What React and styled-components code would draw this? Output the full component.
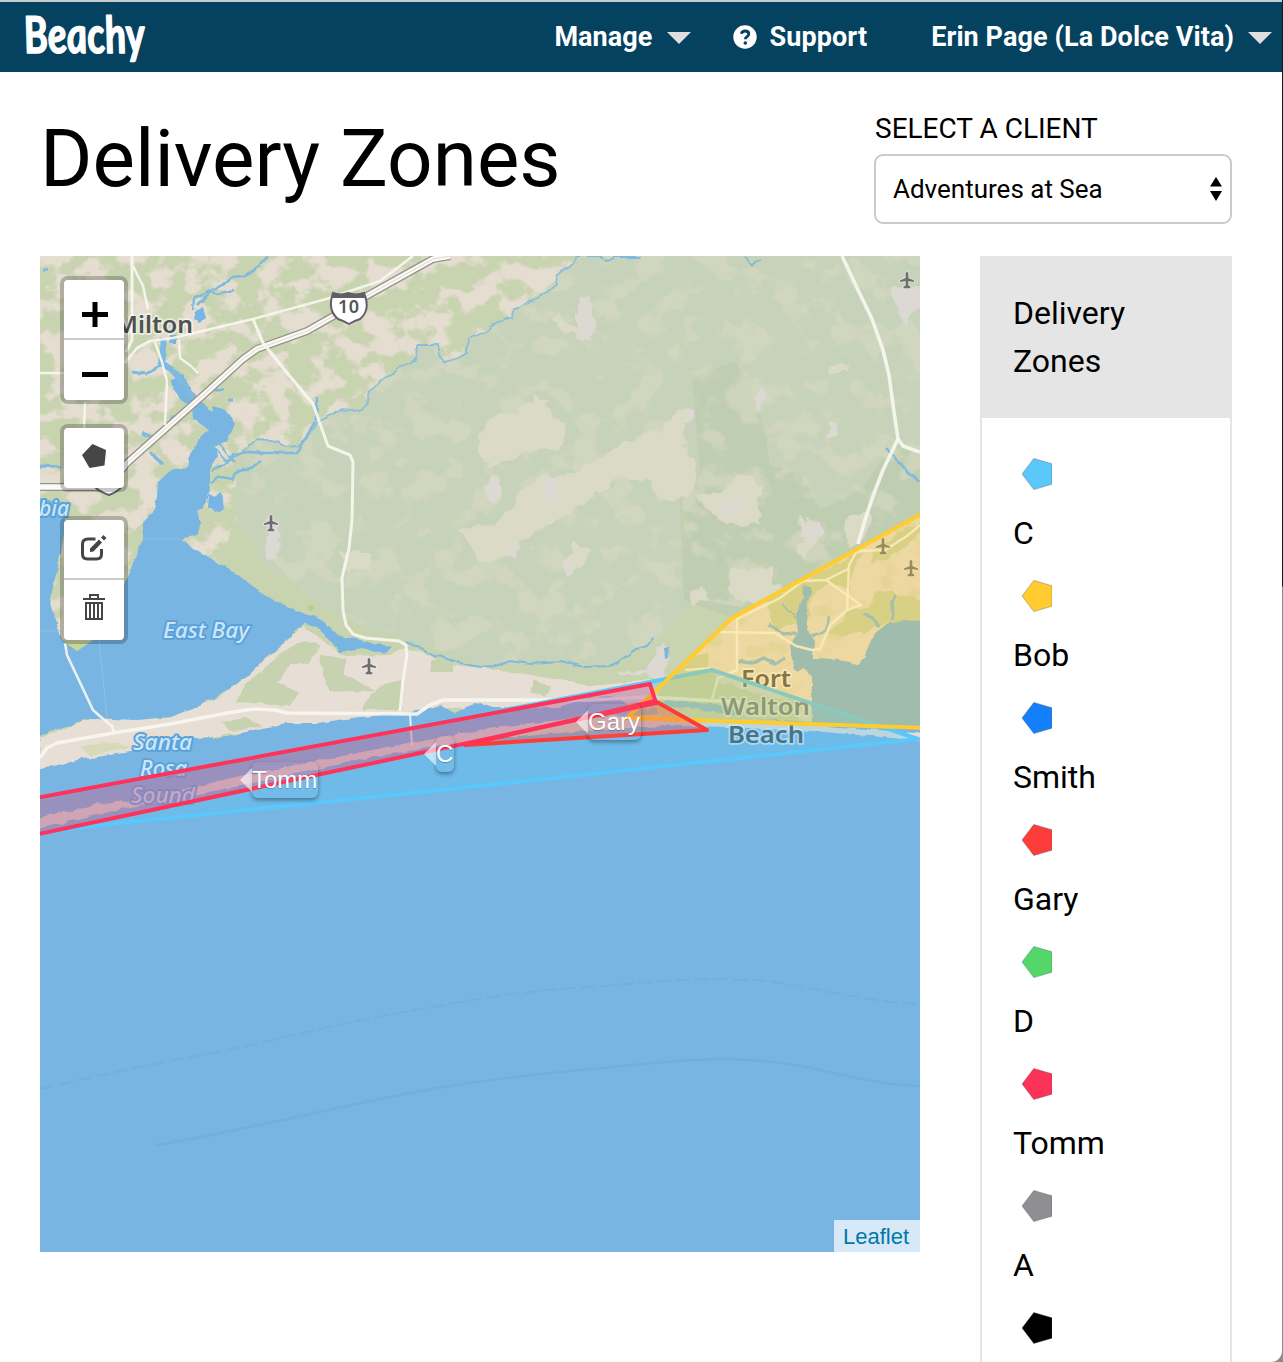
import React from 'react';
import styled, { createGlobalStyle } from 'styled-components';

const GlobalStyle = createGlobalStyle`
  *, *::before, *::after { box-sizing: border-box; }
  html { background: linear-gradient(#16181b 0 586px, #8c8c8c 587px); }
  body { margin: 0; overflow: hidden; font-family: Roboto, sans-serif; color: #000; }
`;

const Window = styled.div`
  width: 1282px;
  height: 1362px;
  overflow: hidden;
  background: #fff;
  border-bottom-right-radius: 11px;
`;

const Navbar = styled.header`
  display: flex;
  align-items: center;
  height: 72px;
  padding: 0 10px 0 22px;
  background: #05425f;
  border-top: 2px solid #c9cccd;
`;

const Logo = styled.svg`
  display: block;
  width: 126px;
  height: 70px;
  margin-right: auto;
  overflow: visible;
`;

const NavItem = styled.a`
  display: flex;
  align-items: center;
  gap: ${(p) => p.$gap || 14}px;
  margin-left: ${(p) => p.$offset || 0}px;
  color: #fff;
  font-size: 27px;
  font-weight: 700;
  line-height: 40px;
  letter-spacing: 0.08px;
  white-space: nowrap;
`;

const Caret = styled.span`
  width: 0;
  height: 0;
  margin-top: 2px;
  border: 12px solid transparent;
  border-top-color: #dfdfdf;
  border-bottom: 0;
`;

const PageHead = styled.div`
  display: flex;
  justify-content: space-between;
  height: 184px;
  padding: 40px 50px 0 40px;
`;

const Title = styled.h1`
  margin: 0;
  font-size: 80px;
  font-weight: 400;
  line-height: 94px;
`;

const ClientField = styled.label`
  display: flex;
  flex-direction: column;
  width: 358px;
  gap: 8px;
  font-size: 28px;
  line-height: 34px;
`;

const FieldCaption = styled.span`
  padding-left: 1px;
`;

const SelectBox = styled.span`
  display: flex;
  align-items: center;
  justify-content: space-between;
  height: 70px;
  padding: 0 8px 0 17px;
  border: 2px solid #cacaca;
  border-radius: 9px;
  font-size: 26px;
`;

const Content = styled.main`
  display: grid;
  grid-template-columns: 880px 252px;
  column-gap: 60px;
  align-items: start;
  padding-left: 40px;
`;

const MapFrame = styled.section`
  position: relative;
  height: 996px;
  overflow: hidden;
  background: #78b5e2;
`;

const MapCanvas = styled.svg`
  display: block;
  width: 880px;
  height: 996px;
`;

const Controls = styled.div`
  position: absolute;
  top: 20px;
  left: 20px;
  display: flex;
  flex-direction: column;
`;

const ButtonGroup = styled.div`
  width: 68px;
  margin-bottom: ${(p) => p.$gap || 0}px;
  border: 4px solid rgba(0, 0, 0, 0.22);
  border-radius: 8px;
  background: #fff;
  background-clip: padding-box;
`;

const ControlButton = styled.button`
  display: flex;
  align-items: center;
  justify-content: center;
  width: 60px;
  height: 60px;
  padding: 0;
  border: 0;
  background: none;
  &:first-child:not(:last-child) { border-bottom: 2px solid #ccc; }
`;

const ZoneTag = styled.div`
  position: absolute;
  left: ${(p) => p.$x}px;
  top: ${(p) => p.$y}px;
  height: 36px;
  padding-right: 1px;
  border-radius: 6px;
  background: rgba(255, 255, 255, 0.04);
  box-shadow: 0 2px 4px rgba(0, 0, 0, 0.38);
  color: #fff;
  font: 24px/36px "Liberation Sans", Arial, sans-serif;
  white-space: nowrap;
  text-shadow: 0 1px 1px rgba(0, 0, 0, 0.25);
  &::before {
    content: "";
    position: absolute;
    left: -12px;
    top: 6px;
    border: 12px solid transparent;
    border-left: 0;
    border-right-color: rgba(255, 255, 255, 0.62);
  }
`;

const Attribution = styled.div`
  position: absolute;
  right: 0;
  bottom: 0;
  width: 86px;
  height: 32px;
  padding-left: 9px;
  background: rgba(255, 255, 255, 0.7);
  color: #0078a8;
  font: 22px/33px "Liberation Sans", Arial, sans-serif;
`;

const Sidebar = styled.aside`
  height: 1106px;
  font-size: 32px;
  line-height: 48px;
`;

const SidebarHead = styled.div`
  height: 162px;
  padding: 33px 99px 32px 33px;
  background: #e5e5e5;
`;

const ZoneList = styled.ul`
  margin: 0;
  padding: 32px 30px 0 31px;
  list-style: none;
  border: 2px solid #e5e5e5;
  border-width: 0 2px;
  height: 944px;
  overflow: hidden;
`;

const ZoneRow = styled.li`
  display: flex;
  flex-direction: column;
  height: 122px;
  padding: 8px 0 0;
`;

const Marker = styled.svg`
  display: block;
  width: 30px;
  height: 32px;
  margin: 0 0 19px 9px;
`;

const zones = [
  ['C', '#5ac8fa'],
  ['Bob', '#ffcb2f'],
  ['Smith', '#147efb'],
  ['Gary', '#fd3d39'],
  ['D', '#53d769'],
  ['Tomm', '#fd3259'],
  ['A', '#8e8e93'],
  ['', '#000'],
];

const creek = '577,256 570,265 557,276 556,284 552,289 543,295 530,301 522,307 513,309 512,317 503,321 497,322 490,328 487,332 480,334 468,339 467,353 458,358 443,362 440,355 438,345 417,345 416,358 410,364 400,366 392,374 380,381 370,391 368,400 362,409 354,411 340,410 327,417 317,423 311,430 307,438 303,444 296,446 287,447 278,442 270,440 257,439 249,446 240,453 230,459';

const roads = [
  ['132,256 132,340 126,352', 3],
  ['133,266 143,286 148,309', 2.5],
  ['125,363 137,348 150,341 173,338 253,319 330,298 347,292 380,281 413,256', 2.6],
  ['253,319 263,343 288,374 313,404 328,446 340,451', 3],
  ['155,342 162,362 167,381 165,425', 2.5],
  ['179,340 180,358 191,366 198,373', 2.2],
  ['340,451 350,455 353,462 352,520 349,548 342,578 343,610 346,625 353,634 365,638 399,641 406,645 407,655 403,680 400,711', 3],
  ['40,758 47,748 57,743 113,733 170,724 227,713 253,709 275,710 287,713 417,714 430,705 443,700 590,700 647,697 700,700 740,702', 3.5],
  ['40,373 66,373', 2.5],
  ['85,402 84,430', 2.5],
  ['65,643 67,655 93,710 102,718 112,726 114,733', 2.6],
  ['842,256 858,290 872,319 883,350 889,375 893,405 898,439 883,470 873,496 865,520 858,544', 3.6],
  ['898,439 903,446 911,449 920,452', 3.6],
  ['737,619 780,598 803,581 826,580 848,569', 2.5],
  ['715,632 775,633 796,646 812,650 820,649 830,625 847,610 861,605 826,580', 2.5],
  ['737,619 737,670 718,678 712,699', 2.5],
  ['847,610 849,565 857,551 885,550 907,536 920,525', 2.5],
  ['685,670 710,668', 2],
  ['410,714 412,746', 2],
];

const patches = [
  '492,414 517,413 535,398 548,402 554,420 568,425 562,448 545,449 520,455 490,467 478,446 480,435',
  '460,528 495,525 510,510 520,491 545,476 570,475 600,456 628,443 660,430 681,408 696,411 684,421 685,446 698,468 688,497 665,503 650,480 620,476 590,500 565,516 530,535 510,558 480,563',
  '573,540 594,551 583,562 570,576 561,566 571,555',
  '698,499 723,491 740,474 754,478 763,487 758,500 761,524 735,525 718,520',
  '730,571 772,567 772,584 785,588 764,600 744,602 726,594',
  '556,311 563,320 577,330 592,340 580,341 565,330 553,320',
  '340,552 370,552 370,569 347,571',
  '830,365 850,365 850,372 831,372',
  '842,520 870,510 864,540 849,550',
  '690,592 701,587 708,600 701,610 693,604',
  '805,516 818,526 818,539 802,560 796,547 807,544',
];

const grayPatches = [
  '578,298 590,293 592,312 598,328 586,343 578,332',
  '545,478 557,477 557,493 548,505 543,500',
  '484,487 493,474 503,487 499,503 490,502',
  '510,536 522,544 516,558 505,553',
  '562,562 576,565 569,573',
  '753,396 762,388 772,397 762,402 757,411',
  '828,420 836,422 838,434 828,438',
  '799,514 806,525 820,524 824,534 811,538 800,536',
  '717,508 736,497 743,503 738,520 722,516',
  '893,288 920,287 920,305 910,315 905,328 896,306',
  '682,413 696,411 688,422 681,420',
  '267,519 279,523 277,560 266,555',
  '658,648 664,640 668,652 670,665 662,679 652,676 640,675 616,675 617,672 645,672',
  '355,665 365,660 378,664 377,674 362,681',
];

const airports = [[271, 523], [369, 666], [907, 280], [883, 546], [911, 568]];

const Plane = ({ x, y }) => (
  <path
    transform={`translate(${x} ${y})`}
    d="M-1.3 -7Q0 -9 1.3 -7V-2L7 0.4V2L1.3 1V5.5L3.4 6.8V8.2H-3.4V6.8L-1.3 5.5V1L-7 2V0.4L-1.3 -2Z"
    fill="#6e6d72" stroke="#eee" strokeOpacity=".5" strokeWidth="2" paintOrder="stroke"
  />
);

const WaterLabel = ({ x, y, w, children }) => (
  <text x={x} y={y} textLength={w} lengthAdjust="spacingAndGlyphs" fontFamily="'Noto Sans', sans-serif"
    fontStyle="italic" fontWeight="500" fontSize="22" fill="#cfe5f7" stroke="#58a3dc" strokeWidth="4"
    strokeLinejoin="round" paintOrder="stroke">{children}</text>
);

const TownLabel = ({ x, y, w, fill = '#505050', children }) => (
  <text x={x} y={y} textLength={w} lengthAdjust="spacingAndGlyphs" fontFamily="'Noto Sans', sans-serif"
    fontWeight="600" fontSize="24" fill={fill} stroke="#fff" strokeOpacity=".6" strokeWidth="3.5"
    strokeLinejoin="round" paintOrder="stroke">{children}</text>
);

function TerrainMap() {
  return (
    <MapCanvas viewBox="40 256 880 996">
      <defs>
        <filter id="fields" x="0" y="0" width="1" height="1" colorInterpolationFilters="sRGB">
          <feTurbulence type="fractalNoise" baseFrequency=".038 .045" numOctaves="4" seed="8" />
          <feColorMatrix values="0 0 0 0 .91  0 0 0 0 .875  0 0 0 0 .83  7 0 0 0 -3.2" />
        </filter>
        <filter id="scrub" x="0" y="0" width="1" height="1" colorInterpolationFilters="sRGB">
          <feTurbulence type="fractalNoise" baseFrequency=".03 .034" numOctaves="4" seed="21" />
          <feColorMatrix values="0 0 0 0 .86  0 0 0 0 .855  0 0 0 0 .77  7 0 0 0 -3.5" />
        </filter>
        <filter id="woods" x="0" y="0" width="1" height="1" colorInterpolationFilters="sRGB">
          <feTurbulence type="fractalNoise" baseFrequency=".04 .05" numOctaves="3" seed="14" />
          <feColorMatrix values="0 0 0 0 .77  0 0 0 0 .82  0 0 0 0 .67  7 0 0 0 -3.9" />
        </filter>
        <filter id="rough" x="-.05" y="-.05" width="1.1" height="1.1" colorInterpolationFilters="sRGB">
          <feTurbulence type="fractalNoise" baseFrequency=".08" numOctaves="2" seed="3" />
          <feDisplacementMap in="SourceGraphic" scale="12" xChannelSelector="R" yChannelSelector="G" />
        </filter>
        <filter id="shore" x="-.05" y="-.05" width="1.1" height="1.1" colorInterpolationFilters="sRGB">
          <feTurbulence type="fractalNoise" baseFrequency=".09" numOctaves="2" seed="5" />
          <feDisplacementMap in="SourceGraphic" scale="5" xChannelSelector="R" yChannelSelector="G" />
        </filter>
        <clipPath id="northwest">
          <polygon points={`40,256 ${creek} 237,470 235,520 220,566 180,545 40,660`} />
        </clipPath>
        <clipPath id="base">
          <polygon points={`${creek} 237,470 235,520 300,590 343,620 400,637 480,665 560,660 610,664 655,640 700,600 760,610 920,500 920,256`} />
        </clipPath>
        <clipPath id="bayside">
          <polygon points="732,619 925,514 925,640 810,722 650,700 670,680" />
        </clipPath>
      </defs>

      <rect x="40" y="256" width="880" height="520" fill="#c8d3b0" />
      <g clipPath="url(#northwest)"><rect x="40" y="256" width="540" height="420" filter="url(#fields)" opacity=".9" /></g>
      <polygon fill="#c6d2b9" points={`${creek} 237,470 235,520 262,560 300,590 343,620 400,637 480,665 560,660 610,664 655,640 700,600 760,610 920,500 920,256`} />
      <polygon fill="#bfceb0" points="692,375 735,362 750,385 765,430 770,465 800,475 820,510 860,490 898,440 920,455 920,515 732,618 684,600 680,500 700,470" />
      <g clipPath="url(#base)">
        <rect x="230" y="256" width="690" height="450" filter="url(#scrub)" opacity=".55" />
        <g fill="#dbdac7" filter="url(#rough)">{patches.map((p) => <polygon key={p} points={p} />)}</g>
      </g>
      <g fill="#dcd8d2" filter="url(#rough)">{grayPatches.map((p) => <polygon key={p} points={p} />)}</g>

      <g clipPath="url(#bayside)">
        <rect x="650" y="510" width="275" height="220" fill="#e6ddd3" />
        <g fill="#c8d2ab" filter="url(#rough)">
          <path d="M765 600L860 552L850 590L830 582L812 595L808 620L775 630ZM850 605L865 610L880 590L925 600V625L885 622L862 634H830L845 615Z" />
          <path d="M870 550L925 520V530L905 548L885 560L872 563ZM660 680L705 650L715 680L760 695L800 705V722H650Z" />
        </g>
        <rect x="650" y="510" width="275" height="220" filter="url(#woods)" opacity=".4" />
      </g>

      <g filter="url(#shore)">
        <polygon fill="#e7dfd5" points="303,627 330,645 345,656 390,655 405,648 430,655 440,665 480,667 560,680 590,686 650,680 660,700 600,706 440,708 330,722 200,738 40,770 40,738 90,718 170,718 220,697 260,664" />
        <g fill="#c7d2b1">
          <path d="M285 650L305 640L320 645L310 662L290 665L278 683L300 693L290 705L235 702L245 685L268 665Z" />
          <path d="M320 655L345 658L345 675L375 690L330 692L323 675Z" />
          <path d="M386 684L402 680L402 710H363L370 693ZM430 661H452V672H430ZM534 680L550 687L545 698L530 692Z" />
          <path d="M222 722L245 718L262 726L230 732Z" />
        </g>
        <path fill="#d6dab8" d="M80 746L115 742L130 748L90 756Z" />
      </g>

      <g fill="#78b5e2" filter="url(#shore)">
        <path d="M170 381L183 374L197 399L213 413L212 406L227 410L235 424L227 441L215 446L217 456L210 469L210 486L207 503L197 511L201 523L198 533L183 539L193 549L227 568L267 596L290 608L308 615L315 614L327 625L337 635L350 638L373 643L392 647L383 653L363 648L340 652L328 638L317 627L303 625L287 640L260 663L243 680L220 695L190 710L170 717L137 720L90 718L60 728L30 740V496L63 503L66 530L50 600L62 640L77 651L90 642L110 610L125 581L132 566L140 546L142 539L143 523L155 509L157 483L170 471L188 467L188 458L195 448L200 436L208 429L193 419L192 406L180 399Z" />
        <path d="M209 493L215 496L222 492L224 509L218 513L208 508Z" />
        <path d="M195 312L203 307L206 318L199 323L194 320ZM170 336H176V344H169Z" />
        <path d="M30 772L77 760L130 752L193 738L227 737L253 730L287 723L317 723L360 717L410 713L440 705L455 713L470 705L480 703L493 707L517 708L560 707L587 698L613 697L627 703L647 710L667 700L693 703L727 705L747 718L812 722V677L804 668L797 672L793 668L796 655L804 648L812 650L814 659L840 660L857 665L867 653L875 633L890 622L930 620V1260H30Z" />
        <path d="M793 668L790 645L792 640L798 632L796 615L803 598L802 586L812 587L808 602L806 622L809 632L815 640L814 648L804 650Z" />
        <path d="M664 648L670 647L669 657L665 658Z" />
      </g>
      <rect x="40" y="850" width="880" height="410" fill="#78b5e2" />
      <path d="M62 640L77 651L90 642Z" fill="#cbd59a" />
      <circle cx="311" cy="608" r="3" fill="#b8d08c" />

      <g fill="none" stroke="#7ebae0" strokeWidth="1.8" filter="url(#shore)">
        <polyline points={creek} opacity=".85" />
        <polyline points="267,256 255,270 245,276 232,277 222,285 208,292 195,298 194,310" strokeWidth="2.4" />
        <polyline points="198,305 210,292 218,294 234,290" strokeWidth="2.6" />
        <polyline points="163,338 164,350 162,363 172,370 184,383 195,400" strokeWidth="6" />
        <polyline points="132,372 145,374 158,367 165,366" strokeWidth="3" />
        <polyline points="212,470 225,464 234,454 248,452 265,453 280,453 297,453 304,441 310,428 316,420 317,398" strokeWidth="2.5" />
        <polyline points="211,484 220,477 232,479 240,470 250,468 262,461" strokeWidth="2.5" />
        <polyline points="212,445 225,460 233,462 217,441" />
        <polyline points="407,642 420,648 434,656 445,657 460,663 480,667 495,666 511,661 530,664 560,662 585,667 610,666 622,660 637,649 647,646 654,637" strokeWidth="2" />
        <polyline points="745,257 752,265 762,260" />
        <polyline points="577,256 600,256 607,261 615,257 640,257" />
        <polyline points="886,448 898,461 908,472 920,482" strokeWidth="2.5" />
        <polyline points="797,635 785,633 768,624" strokeWidth="3" />
        <polyline points="797,620 782,604" />
        <polyline points="812,635 826,632 828,617" strokeWidth="2.5" />
        <polyline points="878,626 874,620 865,614" strokeWidth="3.5" />
        <polyline points="893,619 892,602 895,594" strokeWidth="3.5" />
        <polyline points="738,661 752,663 763,658 775,663 785,658" strokeWidth="3.5" />
        <polyline points="40,466 62,467" strokeWidth="3" />
        <path d="M142 433l14 5M150 452l13 12M170 418h5M215 390h9M229 400h4M43 270h5" strokeWidth="3" />
      </g>

      <g filter="url(#shore)">
        <path fill="#e6ddd2" d="M30 820L40 817L90 807L97 801L105 804L150 797L185 789L240 776L307 763L373 750L433 738L480 730L530 723L580 718L650 714L720 720L813 725L880 730L925 734V741L813 731L680 725L613 729L547 734L480 741L440 746L373 757L240 786L130 807L40 828L30 830Z" />
        <path fill="#c9d2b3" d="M655 706L690 708L740 716L790 723L740 722L660 718Z" />
      </g>

      <path fill="none" stroke="#96938a" strokeWidth="8" d="M450 256L433 259L363 298L337 314L307 331L257 349L243 359L208 391L127 463L108 487H40" />
      <path fill="none" stroke="#fbfaf6" strokeWidth="5.4" d="M450 256L433 259L363 298L337 314L307 331L257 349L243 359L208 391L127 463L108 487H40" />
      <path fill="none" stroke="#ded9cd" strokeWidth="1" d="M450 256L433 259L363 298L337 314L307 331L257 349L243 359L208 391L127 463" />
      {roads.map(([p, w]) => (
        <polyline key={p} points={p} fill="none" stroke="#f8f7f1" strokeOpacity=".9" strokeWidth={w} strokeLinejoin="round" />
      ))}
      <path d="M142 539H183M99 640L107 718M40 631H62" fill="none" stroke="#a7c9dd" strokeOpacity=".5" strokeWidth="1.2" />

      <path d="M333 293Q341 296 348 293Q356 296 364 293Q371 310 360 319Q354 321 349 324Q344 321 338 319Q327 310 333 293Z" fill="#fff" stroke="#615e6a" strokeWidth="2" />
      <path d="M333 293Q341 296 348 293Q356 296 364 293L365 298H332Z" fill="#615e6a" />
      <text x="338" y="313" textLength="21" fontFamily="'Noto Sans', sans-serif" fontWeight="600" fontSize="18" fill="#555">10</text>
      <path d="M95 487Q100 492 109 495Q118 492 123 485" fill="#fff" stroke="#615e6a" strokeWidth="2" />

      <g fill="none" stroke="#6fb0df" strokeWidth="2.4">
        <path strokeDasharray="14 5" strokeWidth="1.8" d="M40 1089C120 1070 190 1058 264 1042C330 1026 390 1014 444 1005C490 996 530 991 579 988C650 982 690 977 750 980C800 982 850 1001 920 1004" />
        <path d="M155 1145C200 1139 245 1127 293 1118C350 1105 390 1096 444 1087C490 1079 530 1075 579 1070C650 1064 690 1057 750 1060C820 1064 850 1083 920 1086" />
      </g>

      {airports.map(([x, y]) => <Plane key={x} x={x} y={y} />)}
      <TownLabel x={115} y={333} w={78}>Milton</TownLabel>
      <TownLabel x={741} y={687} w={50}>Fort</TownLabel>
      <TownLabel x={721} y={715} w={89} fill="#5d6468">Walton</TownLabel>
      <TownLabel x={728} y={743} w={76} fill="#454f55">Beach</TownLabel>
      <WaterLabel x={163} y={638} w={86}>East Bay</WaterLabel>
      <WaterLabel x={133} y={750} w={59}>Santa</WaterLabel>
      <WaterLabel x={140} y={776} w={47}>Rosa</WaterLabel>
      <WaterLabel x={131} y={803} w={64}>Sound</WaterLabel>
      <WaterLabel x={39} y={516} w={30}>bia</WaterLabel>

      <g strokeWidth="4" strokeLinejoin="round" fillOpacity=".3">
        <polygon points="20,803 650,682 712,670 918,739 480,786 100,825 20,836" fill="#5ac8fa" stroke="#5ac8fa" />
        <polygon points="930,509 732,618 627,718 930,728" fill="#ffcc2f" stroke="#ffcc2f" />
        <polygon points="655,701 707,730 465,745" fill="#ff3b30" stroke="#ff3b38" />
        <polygon points="20,801 650,684 656,703 20,838" fill="#ff3259" stroke="#ff3259" />
      </g>
    </MapCanvas>
  );
}

export default function App() {
  return (
    <>
      <GlobalStyle />
      <Window>
        <Navbar>
          <Logo viewBox="0 0 126 70" aria-label="Beachy">
            <text x="2" y="50.5" transform="translate(-4.5 0) skewX(7)" textLength="121" lengthAdjust="spacingAndGlyphs" fill="#fff" stroke="#fff" strokeWidth="1.4"
              strokeLinejoin="round" fontFamily="Lato, sans-serif" fontStyle="italic" fontWeight="700" fontSize="51">Beachy</text>
          </Logo>
          <NavItem>Manage<Caret /></NavItem>
          <NavItem $offset={42} $gap={13}>
            <svg width="24" height="24" viewBox="0 0 24 24">
              <circle cx="12" cy="12" r="11.7" fill="#fff" />
              <path d="M8.2 8.8C9 6.9 10.2 6 12 6C14.3 6 15.8 7.2 15.8 9C15.8 11.7 12.3 11.5 12.3 14.3" fill="none" stroke="#05425f" strokeWidth="2.8" />
              <circle cx="12.3" cy="18" r="1.8" fill="#05425f" />
            </svg>
            Support
          </NavItem>
          <NavItem $offset={64}>Erin Page (La Dolce Vita)<Caret /></NavItem>
        </Navbar>

        <PageHead>
          <Title>Delivery Zones</Title>
          <ClientField>
            <FieldCaption>SELECT A CLIENT</FieldCaption>
            <SelectBox>
              Adventures at Sea
              <svg width="12" height="24" viewBox="0 0 12 24"><path d="M6 0L12 9.5H0ZM0 14H12L6 24Z" /></svg>
            </SelectBox>
          </ClientField>
        </PageHead>

        <Content>
          <MapFrame>
            <TerrainMap />
            <ZoneTag $x={212} $y={506}>Tomm</ZoneTag>
            <ZoneTag $x={396} $y={480}>C</ZoneTag>
            <ZoneTag $x={548} $y={448}>Gary</ZoneTag>
            <Controls>
              <ButtonGroup $gap={20}>
                <ControlButton aria-label="Zoom in">
                  <svg width="28" height="36" viewBox="0 0 28 36"><path d="M2 23.5H28M15 11V36" stroke="#000" strokeWidth="5" /></svg>
                </ControlButton>
                <ControlButton aria-label="Zoom out">
                  <svg width="28" height="26" viewBox="0 0 28 26"><path d="M2 17.5H28" stroke="#000" strokeWidth="5" /></svg>
                </ControlButton>
              </ButtonGroup>
              <ButtonGroup $gap={24}>
                <ControlButton aria-label="Draw a polygon">
                  <svg width="24" height="28" viewBox="0 0 24 28"><path d="M10.5 0L24 6L22.5 21.5L7.5 24L0 11Z" fill="#464646" /></svg>
                </ControlButton>
              </ButtonGroup>
              <ButtonGroup>
                <ControlButton aria-label="Edit layers">
                  <svg width="26" height="28" viewBox="0 0 26 28">
                    <path d="M14.5 4H7Q1.5 4 1.5 9V19Q1.5 24 6.5 24H15.5Q20.5 24 20.5 19V14" fill="none" stroke="#464646" strokeWidth="3" />
                    <path d="M9 17V13.5L18 4.5L21 7.5L12.5 16.5ZM20 2.5L22.5 0L25.5 3L23 5.5Z" fill="#464646" />
                  </svg>
                </ControlButton>
                <ControlButton aria-label="Delete layers">
                  <svg width="22" height="32" viewBox="0 0 22 32">
                    <path d="M0 5H22M7 4V1H15V4M3 9H19V25H3ZM7 9V25M11 9V25M15 9V25" fill="none" stroke="#464646" strokeWidth="2" />
                  </svg>
                </ControlButton>
              </ButtonGroup>
            </Controls>
            <Attribution>Leaflet</Attribution>
          </MapFrame>

          <Sidebar>
            <SidebarHead>Delivery Zones</SidebarHead>
            <ZoneList>
              {zones.map(([name, color]) => (
                <ZoneRow key={color}>
                  <Marker viewBox="0 0 30 32">
                    <path d="M0 16L11.8 .4L30 5.8V26.2L11.8 31.6Z" fill={color} stroke="#555" strokeOpacity=".6" strokeWidth=".6" />
                  </Marker>
                  {name}
                </ZoneRow>
              ))}
            </ZoneList>
          </Sidebar>
        </Content>
      </Window>
    </>
  );
}
